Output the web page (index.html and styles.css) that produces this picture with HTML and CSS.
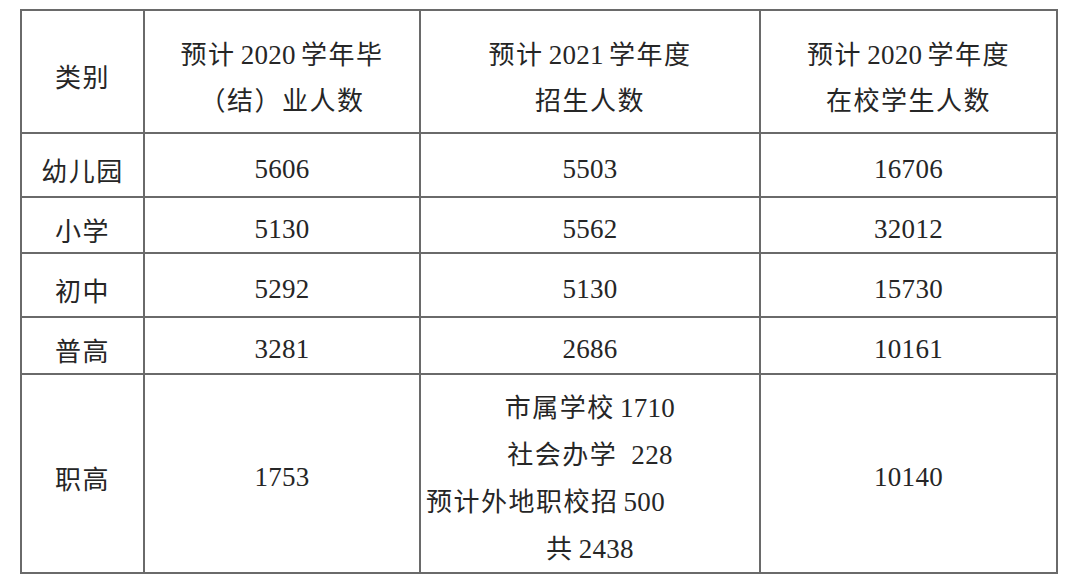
FILE: index.html
```html
<!DOCTYPE html>
<html lang="zh-CN">
<head>
<meta charset="utf-8">
<title>预计学生人数</title>
<link rel="stylesheet" href="styles.css">
</head>
<body>
<div class="sheet">
  <div class="cell head">类别</div>
  <div class="cell head"><div>预计<span class="n"> 2020 </span>学年毕</div><div>（结）业人数</div></div>
  <div class="cell head"><div>预计<span class="n"> 2021 </span>学年度</div><div>招生人数</div></div>
  <div class="cell head"><div>预计<span class="n"> 2020 </span>学年度</div><div>在校学生人数</div></div>

  <div class="cell">幼儿园</div>
  <div class="cell n">5606</div>
  <div class="cell n">5503</div>
  <div class="cell n">16706</div>

  <div class="cell">小学</div>
  <div class="cell n">5130</div>
  <div class="cell n">5562</div>
  <div class="cell n">32012</div>

  <div class="cell">初中</div>
  <div class="cell n">5292</div>
  <div class="cell n">5130</div>
  <div class="cell n">15730</div>

  <div class="cell">普高</div>
  <div class="cell n">3281</div>
  <div class="cell n">2686</div>
  <div class="cell n">10161</div>

  <div class="cell">职高</div>
  <div class="cell n">1753</div>
  <div class="cell multi">
    <div>市属学校<span class="n"> 1710</span></div>
    <div>社会办学<span class="n wide"> 228</span></div>
    <div class="left">预计外地职校招<span class="n"> 500</span></div>
    <div>共<span class="n"> 2438</span></div>
  </div>
  <div class="cell n">10140</div>
</div>
</body>
</html>
```

FILE: styles.css
```css
html, body {
  margin: 0;
  padding: 0;
  background: #ffffff;
}

body {
  font-family: "Noto Sans CJK SC", sans-serif;
  font-size: 26px;
  font-weight: 400;
  letter-spacing: 1.5px;
  color: #262626;
}

.n {
  font-family: "Liberation Serif", "Times New Roman", serif;
  font-size: 27px;
  letter-spacing: 0.3px;
  word-spacing: -2px;
}

span.n {
  line-height: 1;
}

.n.wide {
  padding-left: 9px;
}

.sheet {
  display: grid;
  grid-template-columns: 123px 276px 340px 297px;
  grid-template-rows: 123px 64px 56px 64px 57px 199px;
  margin: 9px 0 0 20px;
  width: max-content;
  border-left: 2px solid #6a6a6a;
  border-top: 2px solid #6a6a6a;
}

.cell {
  box-sizing: border-box;
  border-right: 2px solid #6a6a6a;
  border-bottom: 2px solid #6a6a6a;
  padding: 8px 0 0;
  display: flex;
  flex-direction: column;
  justify-content: center;
  align-items: center;
  text-align: center;
  line-height: 47px;
  white-space: pre;
}

.head {
  line-height: 46px;
}

.multi {
  align-items: stretch;
  padding-top: 5px;
}

.multi .left {
  text-align: left;
  padding-left: 5px;
}
```
